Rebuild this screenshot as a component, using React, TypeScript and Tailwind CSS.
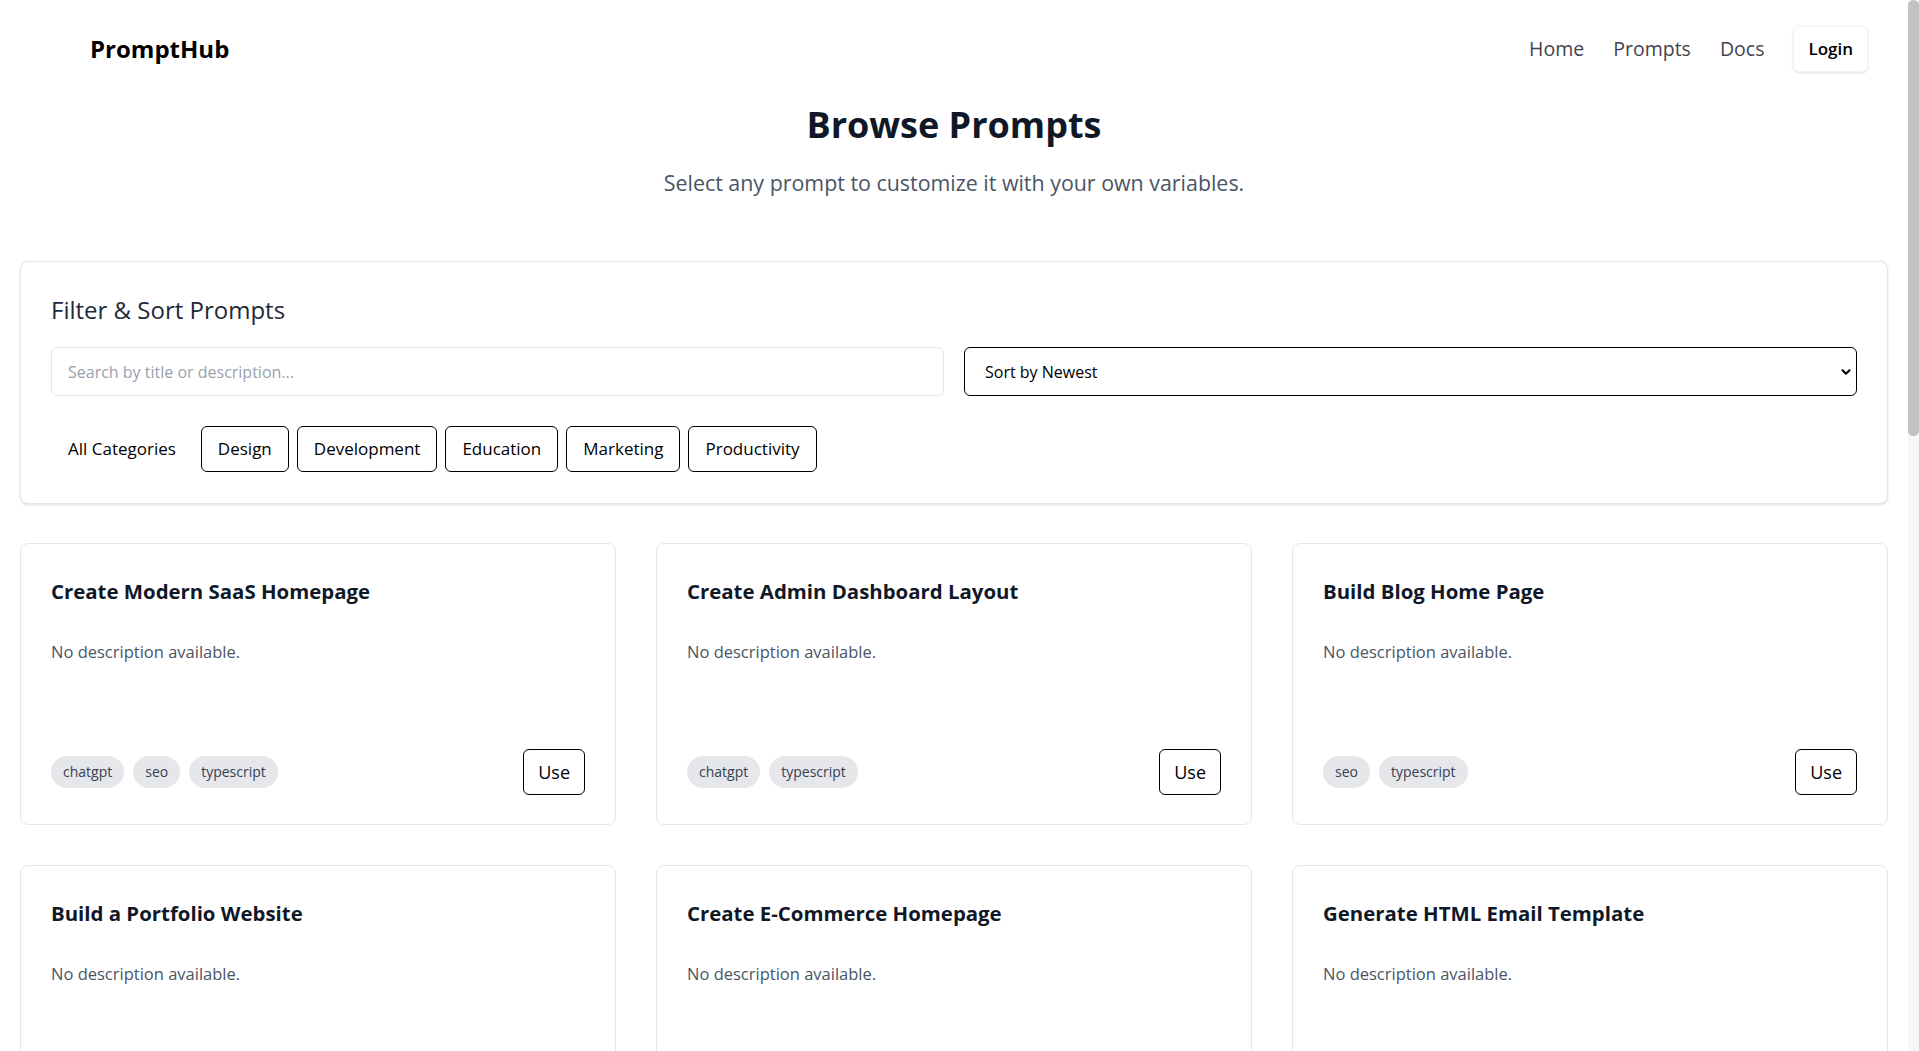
import { ChevronDown } from 'lucide-react'

type Prompt = { title: string; tags: string[] }

const prompts: Prompt[] = [
  { title: 'Create Modern SaaS Homepage', tags: ['chatgpt', 'seo', 'typescript'] },
  { title: 'Create Admin Dashboard Layout', tags: ['chatgpt', 'typescript'] },
  { title: 'Build Blog Home Page', tags: ['seo', 'typescript'] },
  { title: 'Build a Portfolio Website', tags: ['chatgpt', 'seo'] },
  { title: 'Create E-Commerce Homepage', tags: ['chatgpt', 'typescript'] },
  { title: 'Generate HTML Email Template', tags: ['seo', 'typescript'] },
  { title: 'Write Product Launch Announcement', tags: ['chatgpt', 'seo'] },
  { title: 'Create Landing Page Copy', tags: ['chatgpt', 'seo'] },
  { title: 'Design Pricing Page', tags: ['chatgpt', 'typescript'] },
  { title: 'Plan a Weekly Study Schedule', tags: ['chatgpt'] },
  { title: 'Write Unit Tests for a Function', tags: ['chatgpt', 'typescript'] },
  { title: 'Summarize Meeting Notes', tags: ['chatgpt'] },
  { title: 'Draft Social Media Campaign', tags: ['chatgpt', 'seo'] },
  { title: 'Refactor React Component', tags: ['chatgpt', 'typescript'] },
  { title: 'Create Lesson Plan', tags: ['chatgpt'] },
  { title: 'Write SEO Blog Outline', tags: ['seo'] },
  { title: 'Build REST API Endpoint', tags: ['chatgpt', 'typescript'] },
  { title: 'Create Onboarding Checklist', tags: ['chatgpt'] },
]

const categories = ['Design', 'Development', 'Education', 'Marketing', 'Productivity']

function PromptCard({ prompt }: { prompt: Prompt }) {
  return (
    <div className="flex h-[282px] flex-col rounded-lg border border-gray-200 bg-white px-[30px] pb-[29px] pt-[33px]">
      <h3 className="text-[20.4px] font-bold leading-7 text-gray-900">{prompt.title}</h3>
      <p className="mt-[35px] flex-1 text-[16.5px] text-gray-600">No description available.</p>
      <div className="flex items-center justify-between">
        <div className="flex gap-[9px]">
          {prompt.tags.map((tag) => (
            <span key={tag} className="rounded-full bg-gray-200 px-3 py-[6px] text-sm text-gray-700">
              {tag}
            </span>
          ))}
        </div>
        <button className="rounded-md border border-black bg-white px-[14px] py-2 text-lg font-medium text-black">
          Use
        </button>
      </div>
    </div>
  )
}

export default function App() {
  return (
    <div className="flex h-screen bg-white font-['Segoe_UI','Open_Sans',sans-serif] text-gray-900">
      <div className="flex-1 overflow-y-auto">
        {/* Navbar */}
        <nav className="flex h-[98px] items-center justify-between pl-[90px] pr-10">
          <span className="text-2xl font-bold text-black">PromptHub</span>
          <div className="flex items-center gap-[29px]">
            <a className="text-[19.5px] font-medium text-[#45424e]">Home</a>
            <a className="text-[19.5px] font-medium text-[#45424e]">Prompts</a>
            <a className="text-[19.5px] font-medium text-[#45424e]">Docs</a>
            <button className="rounded-md border border-gray-100 bg-white px-[14px] py-2 text-[17px] font-semibold leading-7 text-black shadow-sm">
              Login
            </button>
          </div>
        </nav>

        <main className="px-5 pb-24">
          <div className="mt-[7px] text-center">
            <h1 className="text-4xl font-bold text-gray-900">Browse Prompts</h1>
            <p className="mt-[22px] text-[21.4px] text-gray-600">Select any prompt to customize it with your own variables.</p>
          </div>

          {/* Filter */}
          <section className="mt-[62px] rounded-lg border border-gray-200 bg-white px-[30px] pb-[31px] pt-8 shadow-sm">
            <h2 className="text-2xl font-medium text-gray-800">Filter &amp; Sort Prompts</h2>
            <div className="mt-[21px] grid grid-cols-2 gap-5">
              <input
                className="h-[49px] rounded-md border border-gray-200 px-4 text-base text-gray-900 outline-none placeholder:text-gray-400"
                placeholder="Search by title or description..."
              />
              <div className="relative">
                <select className="h-[49px] w-full appearance-none rounded-md border border-black bg-white pl-5 text-base text-black outline-none">
                  <option>Sort by Newest</option>
                  <option>Sort by Oldest</option>
                  <option>Sort by Title</option>
                </select>
                <ChevronDown
                  className="pointer-events-none absolute right-1 top-1/2 h-[14px] w-[14px] -translate-y-1/2 text-black"
                  strokeWidth={3.5}
                />
              </div>
            </div>
            <div className="mt-[30px] flex items-center gap-2">
              <button className="rounded-md border border-transparent px-4 py-2 text-[17px] font-medium leading-7 text-black">
                All Categories
              </button>
              {categories.map((c) => (
                <button key={c} className="rounded-md border border-black bg-white px-4 py-2 text-[17px] font-medium leading-7 text-black">
                  {c}
                </button>
              ))}
            </div>
          </section>

          {/* Cards */}
          <div className="mt-[39px] grid grid-cols-3 gap-10">
            {prompts.map((p) => (
              <PromptCard key={p.title} prompt={p} />
            ))}
          </div>
        </main>
      </div>

      {/* window scrollbar */}
      <div className="w-[11px] shrink-0 bg-[#f7f7f7]">
        <div className="h-[436px] rounded-full bg-[#c2c2c2]" />
      </div>
    </div>
  )
}
